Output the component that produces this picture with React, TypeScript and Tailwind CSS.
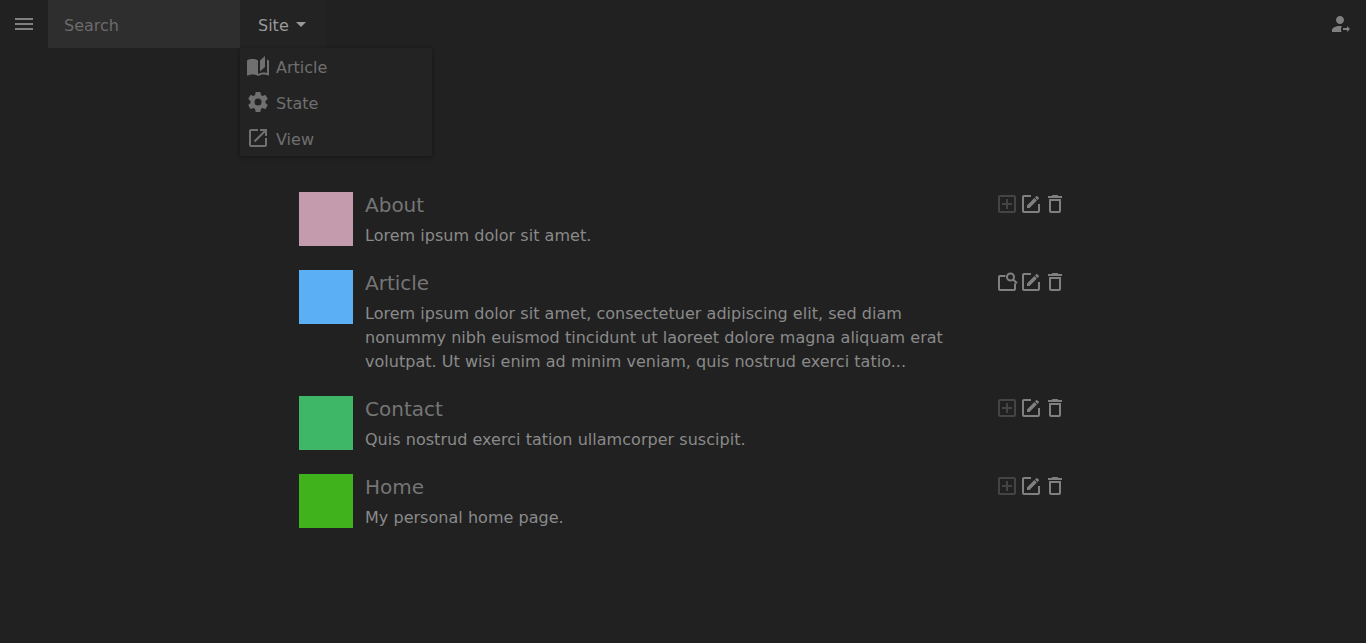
import React from 'react';

const font = { fontFamily: '"DejaVu Sans", sans-serif' };

function Icon({ d, className = '' }: { d: string; className?: string }) {
  return (
    <svg viewBox="0 0 24 24" className={`w-6 h-6 fill-current ${className}`}>
      <path d={d} />
    </svg>
  );
}

const paths = {
  menu: 'M3,6H21V8H3V6M3,11H21V13H3V11M3,16H21V18H3V16Z',
  book: 'M19 2L14 6.5V17.5L19 13V2M6.5 5C4.55 5 2.45 5.4 1 6.5V21.16C1 21.41 1.25 21.66 1.5 21.66C1.6 21.66 1.65 21.59 1.75 21.59C3.1 20.94 5.05 20.5 6.5 20.5C8.45 20.5 10.55 20.9 12 22C13.35 21.15 15.8 20.5 17.5 20.5C19.15 20.5 20.85 20.81 22.25 21.56C22.35 21.61 22.4 21.59 22.5 21.59C22.75 21.59 23 21.34 23 21.09V6.5C22.4 6.05 21.75 5.75 21 5.5V19C19.9 18.65 18.7 18.5 17.5 18.5C15.8 18.5 13.35 19.15 12 20V6.5C10.55 5.4 8.45 5 6.5 5Z',
  gear: 'M12,15.5A3.5,3.5 0 0,1 8.5,12A3.5,3.5 0 0,1 12,8.5A3.5,3.5 0 0,1 15.5,12A3.5,3.5 0 0,1 12,15.5M19.43,12.97C19.47,12.65 19.5,12.33 19.5,12C19.5,11.67 19.47,11.34 19.43,11L21.54,9.37C21.73,9.22 21.78,8.95 21.66,8.73L19.66,5.27C19.54,5.05 19.27,4.96 19.05,5.05L16.56,6.05C16.04,5.66 15.5,5.32 14.87,5.07L14.5,2.42C14.46,2.18 14.25,2 14,2H10C9.75,2 9.54,2.18 9.5,2.42L9.13,5.07C8.5,5.32 7.96,5.66 7.44,6.05L4.95,5.05C4.73,4.96 4.46,5.05 4.34,5.27L2.34,8.73C2.21,8.95 2.27,9.22 2.46,9.37L4.57,11C4.53,11.34 4.5,11.67 4.5,12C4.5,12.33 4.53,12.65 4.57,12.97L2.46,14.63C2.27,14.78 2.21,15.05 2.34,15.27L4.34,18.73C4.46,18.95 4.73,19.03 4.95,18.95L7.44,17.94C7.96,18.34 8.5,18.68 9.13,18.93L9.5,21.58C9.54,21.82 9.75,22 10,22H14C14.25,22 14.46,21.82 14.5,21.58L14.87,18.93C15.5,18.67 16.04,18.34 16.56,17.94L19.05,18.95C19.27,19.03 19.54,18.95 19.66,18.73L21.66,15.27C21.78,15.05 21.73,14.78 21.54,14.63L19.43,12.97Z',
  open: 'M14,3V5H17.59L7.76,14.83L9.17,16.24L19,6.41V10H21V3M19,19H5V5H12V3H5C3.89,3 3,3.9 3,5V19A2,2 0 0,0 5,21H19A2,2 0 0,0 21,19V12H19V19Z',
  plus: 'M19,19V5H5V19H19M19,3A2,2 0 0,1 21,5V19A2,2 0 0,1 19,21H5A2,2 0 0,1 3,19V5C3,3.89 3.9,3 5,3H19M11,7H13V11H17V13H13V17H11V13H7V11H11V7Z',
  edit: 'M5,3C3.89,3 3,3.89 3,5V19A2,2 0 0,0 5,21H19A2,2 0 0,0 21,19V12H19V19H5V5H12V3H5M17.78,4C17.59,4 17.39,4.07 17.24,4.22L16.02,5.43L18.52,7.93L19.74,6.72C20.05,6.41 20.05,5.89 19.74,5.6L18.19,4.22C18.04,4.07 17.96,4 17.78,4M15.37,6.06L8,13.44V16H10.5L17.87,8.62L15.37,6.06Z',
  trash: 'M6,19A2,2 0 0,0 8,21H16A2,2 0 0,0 18,19V7H6V19M8,9H16V19H8V9M15.5,4L14.5,3H9.5L8.5,4H5V6H19V4H15.5Z',
  noteSearch: 'M3,7C3,5.9 3.9,5 5,5H10.5V7H5V19H19V13.5H21V19A2,2 0 0,1 19,21H5A2,2 0 0,1 3,19V7M15.5,2.5A4.5,4.5 0 0,1 20,7C20,7.9 19.75,8.65 19.3,9.3L22.6,12.6L21.2,14L17.9,10.75C17.2,11.2 16.4,11.5 15.5,11.5A4.5,4.5 0 0,1 11,7A4.5,4.5 0 0,1 15.5,2.5M15.5,4.5A2.5,2.5 0 0,0 13,7A2.5,2.5 0 0,0 15.5,9.5A2.5,2.5 0 0,0 18,7A2.5,2.5 0 0,0 15.5,4.5Z',
  user: 'M18 16H14V18H18V20L21 17L18 14V16M11 4C8.8 4 7 5.8 7 8S8.8 12 11 12 15 10.2 15 8 13.2 4 11 4M11 14C6.6 14 3 15.8 3 18V20H12.5C12.2 19.2 12 18.4 12 17.5C12 16.3 12.3 15.2 12.9 14.1C12.3 14.1 11.7 14 11 14',
};

const menuItems = [
  { label: 'Article', icon: paths.book },
  { label: 'State', icon: paths.gear },
  { label: 'View', icon: paths.open },
];

const articles = [
  { title: 'About', text: 'Lorem ipsum dolor sit amet.', color: 'bg-[#c49bad]', first: paths.plus, dim: true },
  {
    title: 'Article',
    text: 'Lorem ipsum dolor sit amet, consectetuer adipiscing elit, sed diam nonummy nibh euismod tincidunt ut laoreet dolore magna aliquam erat volutpat. Ut wisi enim ad minim veniam, quis nostrud exerci tatio...',
    color: 'bg-[#5bb0f5]',
    first: paths.noteSearch,
    dim: false,
  },
  { title: 'Contact', text: 'Quis nostrud exerci tation ullamcorper suscipit.', color: 'bg-[#3eb866]', first: paths.plus, dim: true },
  { title: 'Home', text: 'My personal home page.', color: 'bg-[#40b31c]', first: paths.plus, dim: true },
];

export default function App() {
  return (
    <div className="min-h-screen bg-[#212121] text-[#808080]" style={font}>
      {/* Top bar */}
      <header className="flex items-center h-12">
        <button className="w-12 h-12 flex items-center justify-center text-[#808080]">
          <Icon d={paths.menu} />
        </button>
        <div className="w-48 h-12 bg-[#2e2e2e] px-4 pt-1 flex items-center text-base text-[#6b6b6b]">Search</div>
        <div className="relative">
          <button className="h-12 w-[85px] bg-[#232323] pl-[18px] flex items-center gap-[7px] text-base text-[#9a9a9a]">
            <span className="pt-1">Site</span>
            <span className="w-0 h-0 border-x-[5px] border-x-transparent border-t-[5px] border-t-[#9a9a9a]" />
          </button>
          <div className="absolute left-0 top-12 w-48 bg-[#232323] shadow-[0_1px_4px_rgba(0,0,0,0.4)]">
            {menuItems.map(item => (
              <div key={item.label} className="h-9 pl-[6px] flex items-center gap-[6px] text-base text-[#6f6f6f]">
                <Icon d={item.icon} className="text-[#707070]" />
                <span className="pt-1">{item.label}</span>
              </div>
            ))}
          </div>
        </div>
        <button className="ml-auto w-12 h-12 pr-[2px] flex items-center justify-center text-[#808080]">
          <Icon d={paths.user} />
        </button>
      </header>

      {/* Article list */}
      <main className="w-[768px] mx-auto pt-[144px] flex flex-col gap-6">
        {articles.map(a => (
          <div key={a.title} className="flex gap-3">
            <div className={`w-[54px] h-[54px] shrink-0 ${a.color}`} />
            <div className="flex-1 min-w-0">
              <div className="text-xl leading-[26px] text-[#757575]">{a.title}</div>
              <p className="mt-[6px] -mb-[2px] w-[590px] text-base leading-6 tracking-[0.03px] text-[#8a8a8a]">{a.text}</p>
            </div>
            <div className="flex shrink-0 self-start">
              <Icon d={a.first} className={a.dim ? 'text-[#444444]' : 'text-[#808080]'} />
              <Icon d={paths.edit} className="text-[#808080]" />
              <Icon d={paths.trash} className="text-[#808080]" />
            </div>
          </div>
        ))}
      </main>
    </div>
  );
}
